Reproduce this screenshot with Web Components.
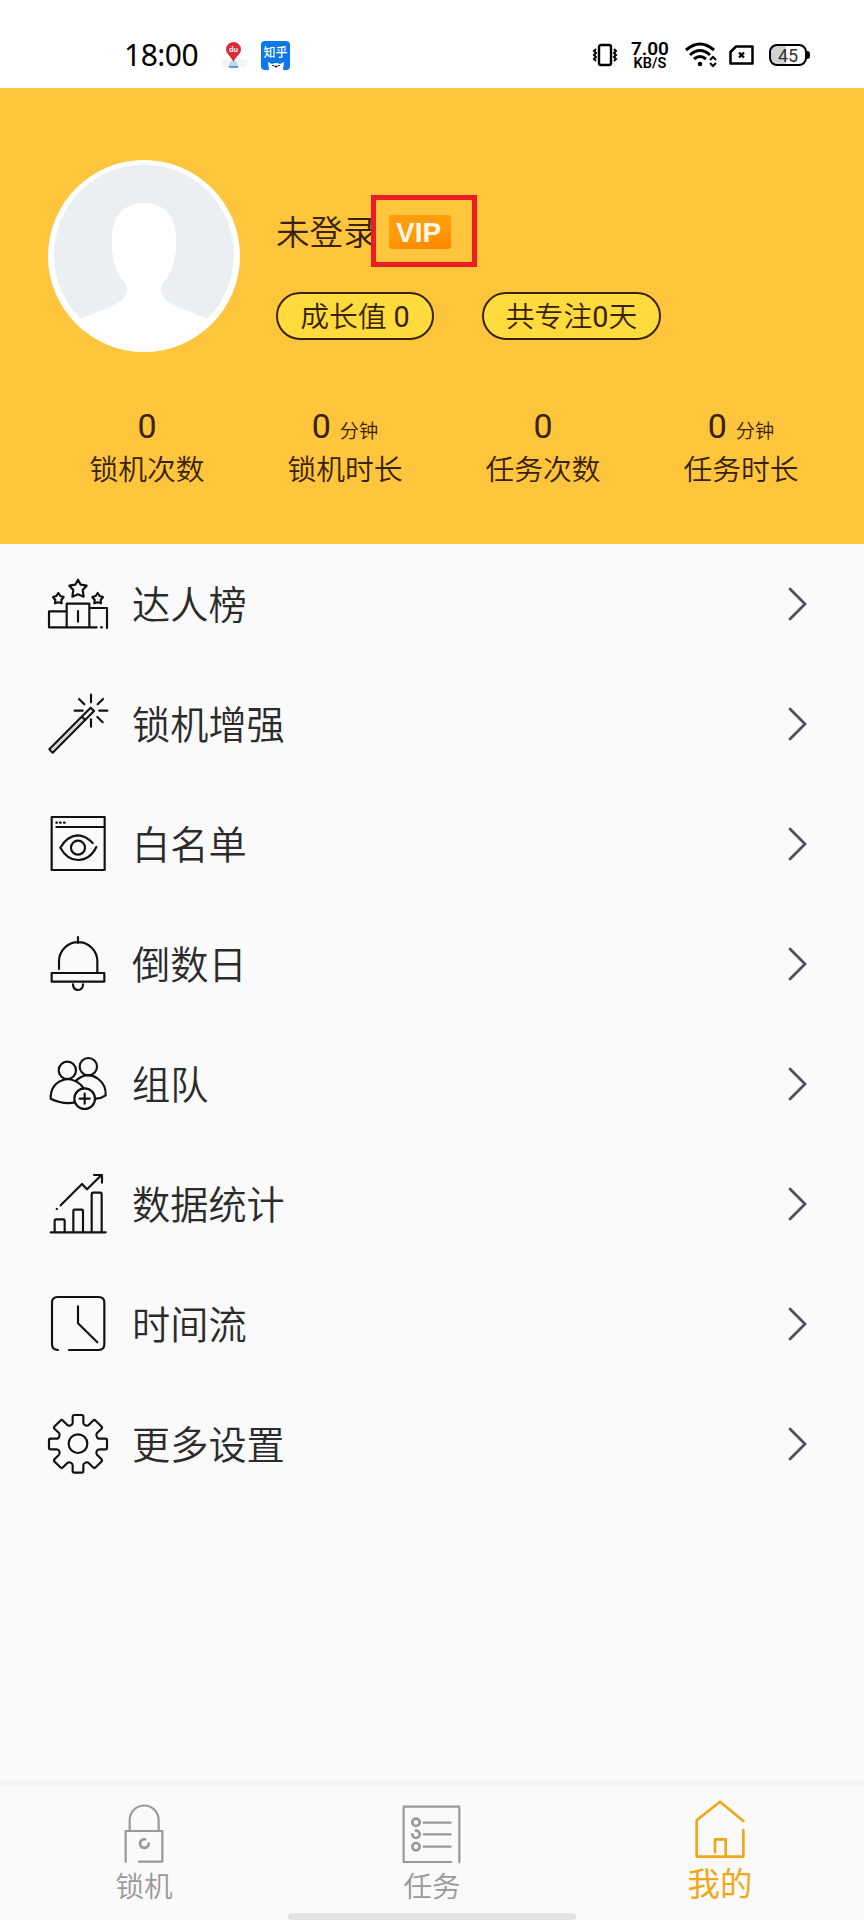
<!DOCTYPE html>
<html lang="zh-CN">
<head>
<meta charset="utf-8">
<title>我的</title>
<style>
  body {
    margin: 0;
    font-family: Roboto, "Noto Sans CJK SC", sans-serif;
    font-weight: 350;
    color: #2b2b2b;
    background: #fafafa;
  }
</style>
</head>
<body>
<profile-page></profile-page>

<script>
(function (customElements) {

  // Line icons, all drawn in a 180 x 180 box
  const ICONS = {
    ranking: `
      <path d="M90 17l8 15 18 3-12 13 3 20-17-7-17 7 3-20-12-13 18-3z"/>
      <path d="M31 57l6 9 10 3-7 9 1 10-10-3-10 3 1-10-7-9 10-3z"/>
      <path d="M149 57l6 9 10 3-7 9 1 10-10-3-10 3 1-10-7-9 10-3z"/>
      <path d="M56 112H3v48h143M56 160V89h68v71M124 102h53v60M90 111v32M159 160h3"/>`,
    wand: `
      <path d="M4 166L128 41l10 10L14 176zM102 68l10 10"/>
      <path d="M9 171L106 74" stroke-width="2" stroke="#888"/>
      <path d="M129 2v23M129 76v22M80 50h24M154 50h24M93 15l16 16M165 15l-16 16M148 69l16 16"/>`,
    whitelist: `
      <path d="M11 9h159v159H11zM25 39h145M25 26h2M36 26h2M48 26h2"/>
      <circle cx="90" cy="101" r="21"/>
      <path d="M134 87Q112 64 89 64 57 66 37 101 58 138 90 138 127 137 145 99"/>`,
    bell: `
      <path d="M90 9v18M33 105V82a57 57 0 0 1 115 0v34"/>
      <path d="M11 117h158v26H11zM75 151v2q2 14 15 15 14-1 15-15v-2"/>`,
    team: `
      <circle cx="58" cy="49" r="26"/>
      <circle cx="121" cy="38" r="26"/>
      <circle cx="110" cy="134" r="31"/>
      <path d="M79 146Q42 151 8 134 7 85 57 75 90 77 107 103M84 80Q118 50 151 75 175 94 173 124 162 132 144 134M95 134h30M110 119v30"/>`,
    chart: `
      <path d="M8 175h165M20 174v-34q0-4 4-4h22q4 0 4 4v34M76 174v-63q0-4 4-4h21q4 0 4 4v63M131 174V60q0-4 4-4h22q4 0 4 4v114"/>
      <path d="M38 94L102 30l15 16L160 4M138 3h24v23M26 105h1"/>`,
    clock: `
      <path d="M30 168q-18 0-18-17V26Q12 9 29 9h123q17 0 17 17v125q0 17-17 17H63M90 37v51l58 57"/>`,
    settings: `
      <circle cx="90" cy="89" r="28"/>
      <path d="M74 8Q74 3 79 3H101Q106 3 106 8V26Q106 32 112 34 118 37 122 33L135 20Q139 16 143 20L160 37Q164 41 160 45L147 57Q143 61 146 67 148 74 154 74H172Q177 74 177 79V101Q177 106 172 106H154Q148 106 146 112 143 118 147 122L160 135Q164 139 160 143L143 160Q139 164 135 160L122 147Q118 143 112 146 106 148 106 154V171Q106 176 101 176H79Q74 176 74 171V154Q74 148 68 146 62 143 58 147L45 160Q41 164 37 160L20 143Q16 139 20 135L33 122Q37 118 34 112 32 106 26 106H8Q3 106 3 101V79Q3 74 8 74H26Q32 74 34 67 37 61 33 57L20 45Q16 41 20 37L37 20Q41 16 45 20L58 33Q62 37 68 34 74 32 74 26Z"/>`,
    lock: `
      <path d="M47 76V45a43 43 0 0 1 87 0v31M35 171V78h110v92H75"/>
      <path d="M93 103a13 13 0 1 0 11 13" stroke-width="8"/>`,
    task: `
      <path d="M148 171H5V5h167v167M65 53h81M65 88h81M65 125h81"/>
      <g stroke-width="8"><circle cx="42" cy="52" r="11"/><circle cx="42" cy="125" r="11"/><path d="M42 77a11 11 0 1 1-11 11"/></g>`,
    home: `
      <path d="M160 69L90 11 20 67V176H160V96M75 163V124H107V175"/>`
  };

  const define = (name, html, setup) => {
    const template = document.createElement('template');
    template.innerHTML = html;
    customElements.define(name, class extends HTMLElement {
      constructor() {
        super();
        this.attachShadow({ mode: 'open' });
        this.shadowRoot.appendChild(template.content.cloneNode(true));
      }

      connectedCallback() {
        if (setup) setup(this, this.shadowRoot);
      }
    });
  };

  define('line-icon', `
    <style>
      :host { display: block; width: 60px; height: 60px; flex: none; }
      svg {
        display: block; width: 100%; height: 100%; overflow: visible;
        fill: none; stroke: currentColor; stroke-width: var(--line, 6.5);
        stroke-linecap: round; stroke-linejoin: round;
      }
    </style>
    <svg viewBox="0 0 180 180"></svg>`,
    (host, root) => {
      root.querySelector('svg').innerHTML = ICONS[host.getAttribute('name')] || '';
    });

  define('status-bar', `
    <style>
      :host {
        display: flex; align-items: center; box-sizing: border-box;
        height: 88px; padding: 22px 55px 0 124px; background: #fff; color: #000;
      }
      svg { display: block; flex: none; overflow: visible; fill: none; stroke: #000; }
      .time { font: 30px/40px "Noto Sans", sans-serif; letter-spacing: -0.5px; width: 96px; }
      .map { margin-right: 12px; }
      .zhihu {
        position: relative; width: 29px; height: 29px; border-radius: 4px; overflow: hidden;
        background: #0a78e8; color: #fff; text-align: center; white-space: nowrap;
        font: 500 12px/22px "Noto Sans CJK SC", sans-serif;
      }
      .zhihu svg { position: absolute; left: 6px; bottom: 0; }
      .right { display: flex; align-items: center; margin-left: auto; }
      .speed {
        display: flex; flex-direction: column; align-items: center;
        width: 40px; margin: 0 15px 0 12px; font: 600 19px/17px Roboto, sans-serif;
      }
      .speed small { font-size: 14.5px; line-height: 14px; }
      .battery {
        position: relative; box-sizing: border-box; width: 38px; height: 22px; margin: 0 2px 0 15px;
        border: 2.4px solid #000; border-radius: 8px; text-align: center;
        background: linear-gradient(90deg, #d2d2d2 45%, #fff 45%);
        font: 18px/19px Roboto, sans-serif; color: #333;
      }
      .battery::after {
        content: ""; position: absolute; right: -5px; top: 5px; width: 3px; height: 8px;
        border-radius: 0 3px 3px 0; background: #000;
      }
    </style>
    <span class="time">18:00</span>
    <svg class="map" width="29" height="26" viewBox="0 0 29 26">
      <path d="M1 18l8-1 5 3 6-3 8 1-2 7H3z" fill="#f4f4f4" stroke="none"/>
      <path d="M11 19h5l3 6H8z" fill="#b8dcf3" stroke="none"/>
      <path d="M9 25h9" stroke="#477bb5" stroke-width="1.5"/>
      <path d="M13.5 20C11 14 6 12 6 7.500a7.500 7.500 0 0 1 15 0C21 12 16 14 13.500 20z" fill="#df2932" stroke="none"/>
      <text x="13.5" y="10" font-family="Roboto" font-size="8" font-weight="600" text-anchor="middle" fill="#fff" stroke="none">du</text>
    </svg>
    <div class="zhihu">知乎
      <svg width="18" height="9" viewBox="0 0 18 9">
        <path d="M2 9L1 1l4 2q4-2 8 0l4-2-1 8z" fill="#fff" stroke="none"/>
        <path d="M7.500 5.500h3M6 4v1M12 4v1" stroke-width="1.5"/>
      </svg>
    </div>
    <div class="right">
      <svg width="26" height="24" viewBox="0 0 26 24" stroke-width="2.4">
        <rect x="7" y="2" width="12" height="20" rx="2"/>
        <path d="M4 6L2 8l2 2-2 2 2 2-2 2 2 2M22 6l2 2-2 2 2 2-2 2 2 2-2 2" stroke-width="2"/>
      </svg>
      <div class="speed"><span>7.00</span><small>KB/S</small></div>
      <svg width="32" height="24" viewBox="0 0 32 24" stroke-width="3">
        <path d="M1 7Q15-5 29 7M5 12Q15 3 25 12M9 16Q15 11 21 16"/>
        <circle cx="15" cy="21" r="2.3" fill="#000" stroke="none"/>
        <path d="M25 17l3-3 3 3M25 20l3 3 3-3" stroke-width="2"/>
      </svg>
      <svg width="25" height="20" viewBox="0 0 25 20" stroke-width="2.5" style="margin-left: 12px">
        <path d="M7 1.500h16.500v17h-22V7z" stroke-linejoin="round"/>
        <path d="M10 7.500l5 5M15 7.500l-5 5" stroke-width="2.2"/>
      </svg>
      <div class="battery">45</div>
    </div>`);

  define('user-avatar', `
    <style>
      :host { display: block; width: 192px; height: 192px; flex: none; }
      svg { display: block; }
    </style>
    <svg width="192" height="192" viewBox="0 0 192 192">
      <circle cx="96" cy="96" r="96" fill="#fff"/>
      <path d="M33 159A90 90 0 1 1 159 159C145 152 126 147 117 139 113 134 112 129 114 124 124 114 129 98 128 77 128 55 115 43 96 43S64 55 64 77C63 98 68 114 78 124 80 129 79 134 75 139 66 147 47 152 33 159z" fill="#ebeff2"/>
    </svg>`);

  define('vip-badge', `
    <style>
      :host {
        display: flex; align-items: center; justify-content: center; box-sizing: border-box;
        width: 106px; height: 72px; border: 5px solid #ec1c24; padding: 1px 8px 0 0;
      }
      span {
        box-sizing: border-box; width: 62px; height: 34px; padding-left: 7px; border-radius: 3px;
        background: linear-gradient(170deg, #ff9c0a 50%, #ff8400);
        font: bold 28px/36px "Liberation Sans", sans-serif; color: #fff8e8;
      }
    </style>
    <span><slot></slot></span>`);

  define('info-pill', `
    <style>
      :host {
        display: block; box-sizing: border-box; height: 48px; border: 2.4px solid #38220a;
        border-radius: 24px; background: #ffdb3d; text-align: center;
        font-size: 28.8px; line-height: 47px; white-space: nowrap;
      }
      ::slotted(span) { font-weight: 400; }
    </style>
    <slot></slot>`);

  define('stat-item', `
    <style>
      :host { display: block; text-align: center; }
      .value { font-size: 34px; line-height: 43px; height: 44px; }
      .value small { margin-left: 9px; font-size: 19.2px; }
      .value small:empty { display: none; }
      .label { font-size: 28.8px; line-height: 42px; }
      ::slotted(span) { font-weight: 400; }
    </style>
    <div class="value"><slot name="value"></slot><small></small></div>
    <div class="label"><slot></slot></div>`,
    (host, root) => {
      root.querySelector('small').textContent = host.getAttribute('unit') || '';
    });

  define('profile-header', `
    <style>
      :host {
        display: block; box-sizing: border-box; height: 456px; padding: 72px 24px 0 48px;
        background: #ffc53d; color: #38220a;
      }
      .user { display: flex; gap: 36px; }
      .info { padding-top: 35px; }
      .name { display: flex; align-items: center; height: 72px; font-size: 33.6px; line-height: 50px; }
      .name span { width: 95px; padding-top: 5px; white-space: nowrap; }
      .pills { display: flex; gap: 48px; margin-top: 25px; }
      .growth { width: 158px; }
      .focus { width: 179px; }
      .stats { display: grid; grid-template-columns: repeat(4, 1fr); margin-top: 53px; }
    </style>
    <div class="user">
      <user-avatar></user-avatar>
      <div class="info">
        <div class="name"><span>未登录</span><vip-badge>VIP</vip-badge></div>
        <div class="pills">
          <info-pill class="growth">成长值 <span>0</span></info-pill>
          <info-pill class="focus">共专注<span>0</span>天</info-pill>
        </div>
      </div>
    </div>
    <div class="stats">
      <stat-item><span slot="value">0</span>锁机次数</stat-item>
      <stat-item unit="分钟"><span slot="value">0</span>锁机时长</stat-item>
      <stat-item><span slot="value">0</span>任务次数</stat-item>
      <stat-item unit="分钟"><span slot="value">0</span>任务时长</stat-item>
    </div>`);

  define('menu-row', `
    <style>
      :host {
        display: flex; align-items: center; height: 120px; padding: 0 56px 0 48px;
        font-size: 38.2px; line-height: 56px;
      }
      .icon { color: #111; margin-right: 24px; }
      .text { padding-top: 4px; }
      .arrow { margin-left: auto; fill: none; stroke: #50505a; stroke-width: 2.8; stroke-linecap: round; }
    </style>
    <div class="icon"></div>
    <span class="text"><slot></slot></span>
    <svg class="arrow" width="20" height="34" viewBox="0 0 20 34"><path d="M2 2L17 17 2 32"/></svg>`,
    (host, root) => {
      root.querySelector('.icon').innerHTML = `<line-icon name="${host.getAttribute('icon')}"></line-icon>`;
    });

  define('tab-item', `
    <style>
      :host {
        display: flex; flex-direction: column; align-items: center;
        padding-top: 19px; color: #999; font-size: 28.6px; line-height: 40px;
      }
      :host([active]) { padding-top: 12px; color: #f0a818; font-size: 32.4px; font-weight: 400; }
      .icon { --line: 6.5; margin-bottom: 2px; }
      :host([active]) .icon { --line: 8; margin-bottom: 7px; }
    </style>
    <div class="icon"></div>
    <slot></slot>`,
    (host, root) => {
      root.querySelector('.icon').innerHTML = `<line-icon name="${host.getAttribute('icon')}"></line-icon>`;
    });

  define('tab-bar', `
    <style>
      :host {
        position: relative; display: grid; grid-template-columns: repeat(3, 1fr);
        box-sizing: border-box; height: 140px; border-top: 6px solid #f5f5f5; overflow: hidden;
      }
      /* gesture bar lies over the tabs */
      .gesture {
        position: absolute; left: 288px; bottom: 0; width: 288px; height: 7px;
        border-radius: 4px; background: #e3e3e3;
      }
    </style>
    <slot></slot>
    <div class="gesture"></div>`);

  define('profile-page', `
    <style>
      :host { display: flex; flex-direction: column; width: 864px; height: 1920px; overflow: hidden; }
      main { flex: 1; }
    </style>
    <status-bar></status-bar>
    <profile-header></profile-header>
    <main>
      <menu-row icon="ranking">达人榜</menu-row>
      <menu-row icon="wand">锁机增强</menu-row>
      <menu-row icon="whitelist">白名单</menu-row>
      <menu-row icon="bell">倒数日</menu-row>
      <menu-row icon="team">组队</menu-row>
      <menu-row icon="chart">数据统计</menu-row>
      <menu-row icon="clock">时间流</menu-row>
      <menu-row icon="settings">更多设置</menu-row>
    </main>
    <tab-bar>
      <tab-item icon="lock">锁机</tab-item>
      <tab-item icon="task">任务</tab-item>
      <tab-item icon="home" active>我的</tab-item>
    </tab-bar>`);

})(window.customElements);
</script>
</body>
</html>
